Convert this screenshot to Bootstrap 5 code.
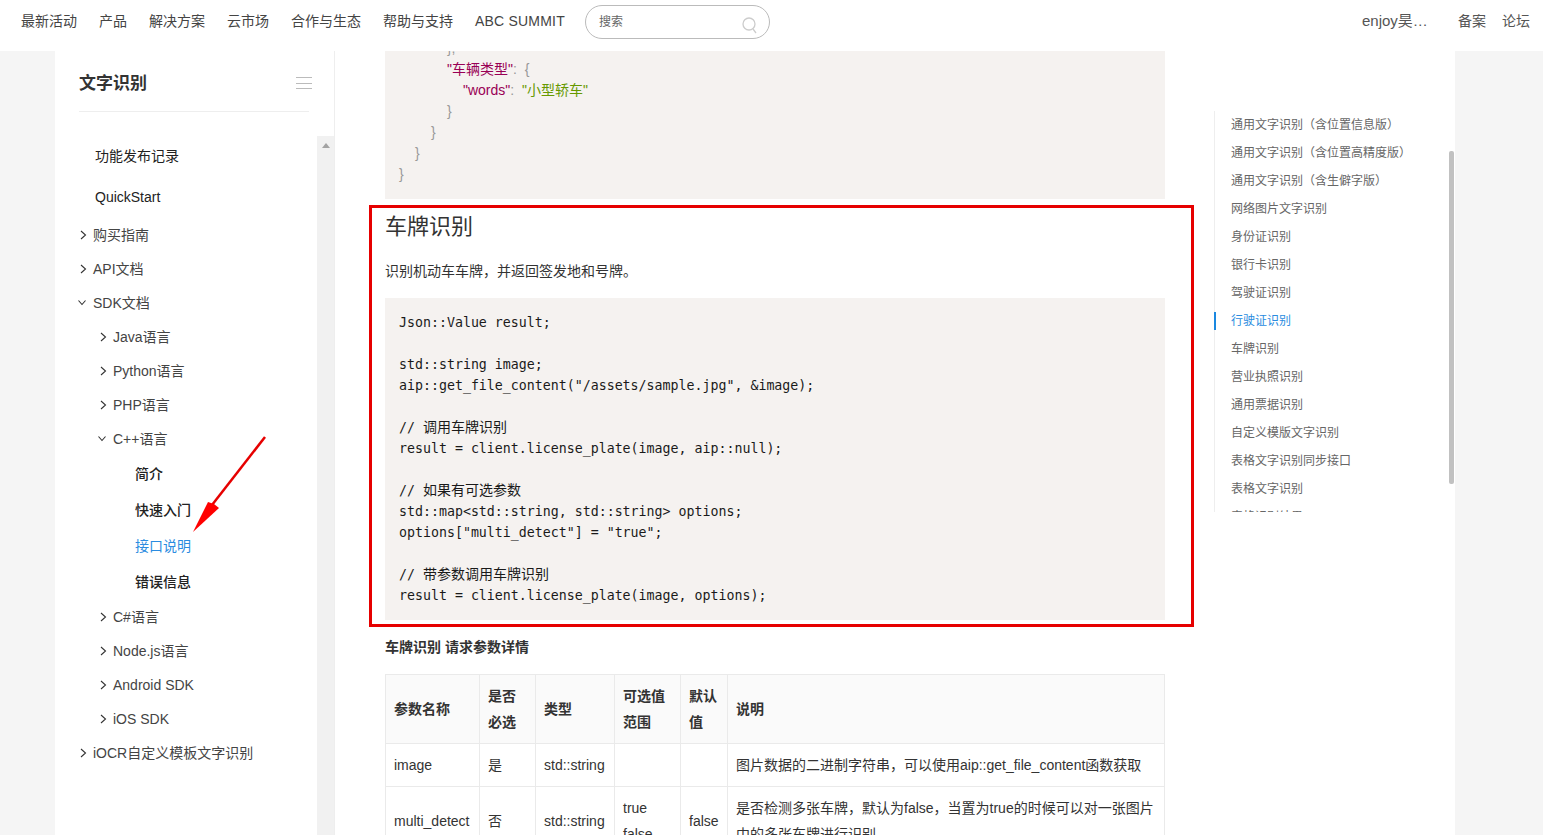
<!DOCTYPE html>
<html lang="zh-CN">
<head>
<meta charset="utf-8">
<title>文字识别</title>
<link href="https://cdn.jsdelivr.net/npm/bootstrap@5.3.0/dist/css/bootstrap.min.css" rel="stylesheet">
<style>
html,body{height:100%;overflow:hidden}
body{font-family:"Liberation Sans","Noto Sans CJK SC",sans-serif;font-size:14px;color:#333;background:#f5f5f5}
a{text-decoration:none;color:inherit}
.topbar{height:51px;background:#fff;padding:0 13px 7px 21px;flex-wrap:nowrap;justify-content:flex-start;position:relative;z-index:3}
.topnav{gap:22px;color:#444;line-height:44px;height:44px;margin-top:-2px}
.abc{letter-spacing:.2px}
.searchpill{width:185px;height:34px;border:1px solid #bbb;border-radius:17px;margin-left:20px;padding:0 11px 0 13px;font-size:12px;color:#666}
.searchpill svg{margin-top:5px}
.topright{margin-left:auto;color:#555;line-height:44px;height:44px;margin-top:-2px}
.usr{font-size:15px;width:80px;color:#555}
.topright .lnk{margin-left:16px}
.shell{height:784px;margin:0 88px 0 55px;background:#fff;overflow:hidden}
.sidepanel{width:280px;flex:none;border-right:1px solid #eee;height:100%}
.sidehead{margin:0 25px 0 24px;padding:21px 0 15px;border-bottom:1px solid #eee;height:61px}
.sidetitle{font-size:17px;line-height:24px;font-weight:700;color:#333;margin:0}
.burger{width:16px;height:12px;margin-top:5px;margin-right:-2px;transform:translateX(1px);border-top:1px solid #bbb;border-bottom:1px solid #bbb;position:relative}
.burger::after{content:"";position:absolute;left:0;right:0;top:5px;height:1px;background:#bbb}
.sidebody{margin-top:24px;height:699px}
.tree{width:262px;flex:none;margin:0;padding:0;list-style:none}
.rowtop{height:41px;line-height:41px;padding-left:40px;color:#222}
.rowa{height:34px;line-height:34px;color:#444;display:flex;align-items:center;padding-left:22px}
.rowb{padding-left:42px}
.rowc{height:36px;line-height:36px;padding-left:80px;color:#222;font-weight:500}
.rowc.on{color:#2a8ce0;font-weight:400}
.slot{width:16px;flex:none;display:block}
.track{width:17px;flex:none;background:#f1f1f1;position:relative}
.trackup{width:0;height:0;border:4px solid transparent;border-top:0;border-bottom:5px solid #a3a3a3;margin:7px auto 0}
.doc{width:780px;flex:none;margin-left:50px}
.snip{background:#f5f2f0;padding:14px;margin:0;font-family:"DejaVu Sans Mono","Noto Sans CJK SC",monospace;font-size:13.28px;line-height:21px;color:#1a1a1a;overflow:hidden;border-radius:0}
.snip-top{margin-top:-13px;padding-top:0;color:#999}
.prop{font-family:"Liberation Sans","Noto Sans CJK SC",sans-serif;font-size:14px;line-height:1}
.k{color:#905}
.t{color:#690}
.cjk{font-family:"Noto Sans CJK SC",sans-serif;font-size:14px;line-height:1}
.platewrap{position:relative;margin-top:12px}
.hl{position:absolute;top:-6px;left:-16px;right:-29px;bottom:-7px;border:3px solid #e60000;pointer-events:none}
.plateh{font-size:22px;line-height:32px;font-weight:400;margin:0;color:#333}
.platep{line-height:24px;margin:16px 0 15px}
.boldp{line-height:24px;font-weight:700;margin:15px 0;color:#333}
.ptable{table-layout:fixed;width:780px;margin:0;--bs-table-border-color:#eaeaea;--bs-table-color:#333;font-size:14px;line-height:26px}
.ptable th,.ptable td{padding:8px;vertical-align:middle;word-break:break-word}
.ptable th{background:#fafafa;font-weight:700}
.c1{width:94px}.c2{width:56px}.c3{width:79px}.c4{width:66px}.c5{width:47px}
.tocside{width:241px;flex:none;margin-left:49px;height:100%}
.toc{list-style:none;margin:60px 0 0;padding:0 0 0 17px;height:401px;overflow:hidden;box-shadow:inset 1px 0 #eee;flex:1 1 auto;font-size:12px;color:#666;position:relative}
.toc li{height:28px;line-height:28px;white-space:nowrap}
.toc li.on{color:#2a8ce0;position:relative}
.toc li.on::before{content:"";position:absolute;left:-17px;top:5px;width:2px;height:18px;background:#1a88e0}
.thumb{width:5px;height:333px;background:#c1c1c1;border-radius:2px;margin:100px 1px 0 8px;flex:none}
.arrowmark{position:absolute;left:185px;top:430px;width:90px;height:110px;z-index:2;pointer-events:none}
</style>
</head>
<body>
<nav class="navbar topbar d-flex align-items-center">
  <div class="d-flex topnav">
    <a href="#">最新活动</a><a href="#">产品</a><a href="#">解决方案</a><a href="#">云市场</a><a href="#">合作与生态</a><a href="#">帮助与支持</a><a href="#" class="abc">ABC SUMMIT</a>
  </div>
  <div class="searchpill d-flex align-items-center justify-content-between">
    <span>搜索</span>
    <svg width="16" height="18" viewBox="0 0 16 18" fill="none" stroke="#ccc" stroke-width="1.3"><circle cx="7" cy="8" r="6"/><path d="M11 13l3 4"/></svg>
  </div>
  <div class="topright d-flex">
    <span class="usr">enjoy昊…</span>
    <a class="lnk" href="#">备案</a><a class="lnk" href="#">论坛</a>
  </div>
</nav>

<div class="shell d-flex">
  <aside class="sidepanel">
    <div class="sidehead d-flex justify-content-between">
      <h1 class="sidetitle">文字识别</h1>
      <div class="burger"></div>
    </div>
    <div class="sidebody d-flex">
      <ul class="tree">
        <li class="rowtop">功能发布记录</li>
        <li class="rowtop">QuickStart</li>
        <li class="rowa"><svg class="slot" height="10" viewBox="0 0 16 10" fill="none" stroke="#333" stroke-width="1.1"><path d="M4 1l4.5 4L4 9"/></svg>购买指南</li>
        <li class="rowa"><svg class="slot" height="10" viewBox="0 0 16 10" fill="none" stroke="#333" stroke-width="1.1"><path d="M4 1l4.5 4L4 9"/></svg>API文档</li>
        <li class="rowa"><svg class="slot" height="10" viewBox="0 0 16 10" fill="none" stroke="#333" stroke-width="1.1"><path d="M1.5 2.5L5 6.5l3.5-4"/></svg>SDK文档</li>
        <li class="rowa rowb"><svg class="slot" height="10" viewBox="0 0 16 10" fill="none" stroke="#333" stroke-width="1.1"><path d="M4 1l4.5 4L4 9"/></svg>Java语言</li>
        <li class="rowa rowb"><svg class="slot" height="10" viewBox="0 0 16 10" fill="none" stroke="#333" stroke-width="1.1"><path d="M4 1l4.5 4L4 9"/></svg>Python语言</li>
        <li class="rowa rowb"><svg class="slot" height="10" viewBox="0 0 16 10" fill="none" stroke="#333" stroke-width="1.1"><path d="M4 1l4.5 4L4 9"/></svg>PHP语言</li>
        <li class="rowa rowb"><svg class="slot" height="10" viewBox="0 0 16 10" fill="none" stroke="#333" stroke-width="1.1"><path d="M1.5 2.5L5 6.5l3.5-4"/></svg>C++语言</li>
        <li class="rowc">简介</li>
        <li class="rowc">快速入门</li>
        <li class="rowc on">接口说明</li>
        <li class="rowc">错误信息</li>
        <li class="rowa rowb"><svg class="slot" height="10" viewBox="0 0 16 10" fill="none" stroke="#333" stroke-width="1.1"><path d="M4 1l4.5 4L4 9"/></svg>C#语言</li>
        <li class="rowa rowb"><svg class="slot" height="10" viewBox="0 0 16 10" fill="none" stroke="#333" stroke-width="1.1"><path d="M4 1l4.5 4L4 9"/></svg>Node.js语言</li>
        <li class="rowa rowb"><svg class="slot" height="10" viewBox="0 0 16 10" fill="none" stroke="#333" stroke-width="1.1"><path d="M4 1l4.5 4L4 9"/></svg>Android SDK</li>
        <li class="rowa rowb"><svg class="slot" height="10" viewBox="0 0 16 10" fill="none" stroke="#333" stroke-width="1.1"><path d="M4 1l4.5 4L4 9"/></svg>iOS SDK</li>
        <li class="rowa"><svg class="slot" height="10" viewBox="0 0 16 10" fill="none" stroke="#333" stroke-width="1.1"><path d="M4 1l4.5 4L4 9"/></svg>iOCR自定义模板文字识别</li>
      </ul>
      <div class="track"><div class="trackup"></div></div>
    </div>
  </aside>

  <main class="doc">
<pre class="snip snip-top">      <span class="prop">},</span>
      <span class="prop k">"车辆类型"</span><span class="prop">:</span> <span class="prop">{</span>
        <span class="prop k">"words"</span><span class="prop">:</span> <span class="prop t">"小型轿车"</span>
      <span class="prop">}</span>
    <span class="prop">}</span>
  <span class="prop">}</span>
<span class="prop">}</span></pre>
    <section class="platewrap">
      <h2 class="plateh">车牌识别</h2>
      <p class="platep">识别机动车车牌，并返回签发地和号牌。</p>
<pre class="snip">Json::Value result;

std::string image;
aip::get_file_content("/assets/sample.jpg", &amp;image);

// <span class="cjk">调用车牌识别</span>
result = client.license_plate(image, aip::null);

// <span class="cjk">如果有可选参数</span>
std::map&lt;std::string, std::string&gt; options;
options["multi_detect"] = "true";

// <span class="cjk">带参数调用车牌识别</span>
result = client.license_plate(image, options);</pre>
      <div class="hl"></div>
    </section>
    <p class="boldp">车牌识别 请求参数详情</p>
    <table class="table table-bordered ptable">
      <colgroup><col class="c1"><col class="c2"><col class="c3"><col class="c4"><col class="c5"><col></colgroup>
      <thead>
        <tr><th>参数名称</th><th>是否必选</th><th>类型</th><th>可选值范围</th><th>默认值</th><th>说明</th></tr>
      </thead>
      <tbody>
        <tr><td>image</td><td>是</td><td>std::string</td><td></td><td></td><td>图片数据的二进制字符串，可以使用aip::get_file_content函数获取</td></tr>
        <tr><td>multi_detect</td><td>否</td><td>std::string</td><td>true<br>false</td><td>false</td><td>是否检测多张车牌，默认为false，当置为true的时候可以对一张图片中的多张车牌进行识别</td></tr>
      </tbody>
    </table>
  </main>

  <div class="tocside d-flex align-items-start">
    <ul class="toc">
      <li>通用文字识别（含位置信息版）</li>
      <li>通用文字识别（含位置高精度版）</li>
      <li>通用文字识别（含生僻字版）</li>
      <li>网络图片文字识别</li>
      <li>身份证识别</li>
      <li>银行卡识别</li>
      <li>驾驶证识别</li>
      <li class="on">行驶证识别</li>
      <li>车牌识别</li>
      <li>营业执照识别</li>
      <li>通用票据识别</li>
      <li>自定义模版文字识别</li>
      <li>表格文字识别同步接口</li>
      <li>表格文字识别</li>
      <li>表格识别结果</li>
    </ul>
    <div class="thumb"></div>
  </div>
</div>

<svg class="arrowmark" viewBox="185 430 90 110">
  <path d="M265 437L212 505" stroke="#e60000" stroke-width="2.5" fill="none"/>
  <path d="M193 532L208 502L214 504L219 508Z" fill="#f00"/>
</svg>
<script src="https://cdn.jsdelivr.net/npm/bootstrap@5.3.0/dist/js/bootstrap.bundle.min.js"></script>
</body>
</html>
